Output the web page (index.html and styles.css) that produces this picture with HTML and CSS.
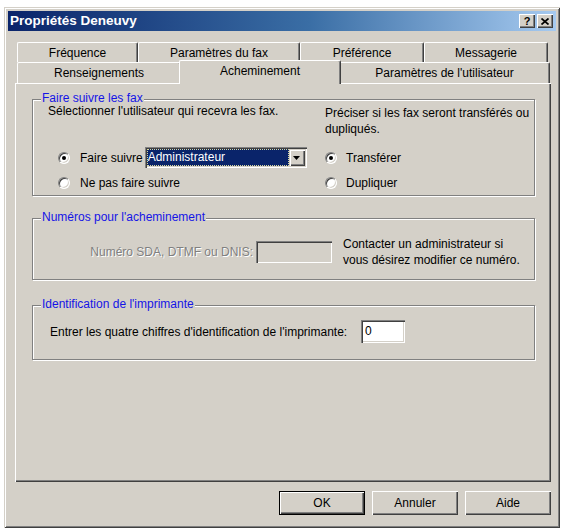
FILE: index.html
```html
<!DOCTYPE html>
<html lang="fr">
<head>
<meta charset="utf-8">
<title>Propriétés Deneuvy</title>
<link rel="stylesheet" href="styles.css">
</head>
<body>
<div class="window">
  <div class="titlebar">
    <span class="title">Propriétés Deneuvy</span>
    <div class="caption-btns">
      <span class="cbtn help">?</span>
      <span class="cbtn close"><svg width="8" height="7" viewBox="0 0 8 7"><path d="M0.5 0.5 L7.5 6.5 M7.5 0.5 L0.5 6.5" stroke="#000" stroke-width="1.7" fill="none"/></svg></span>
    </div>
  </div>
  <div class="dlg-body">
    <div class="tabs">
      <div class="tab-row">
        <div class="tab w-freq">Fréquence</div>
        <div class="tab w-pfax">Paramètres du fax</div>
        <div class="tab w-pref">Préférence</div>
        <div class="tab w-msg">Messagerie</div>
      </div>
      <div class="tab-row front">
        <div class="tab w-rens">Renseignements</div>
        <div class="tab w-ach selected">Acheminement</div>
        <div class="tab w-puti">Paramètres de l'utilisateur</div>
      </div>
    </div>
    <div class="panel">
      <div class="group g-fwd">
        <span class="legend">Faire suivre les fax</span>
        <div class="fwd-cols">
          <div class="col-left">
            <p class="desc">Sélectionner l'utilisateur qui recevra les fax.</p>
            <div class="radio-row first indent">
              <span class="radio checked"></span>
              <span class="rlabel">Faire suivre</span>
              <div class="combo">
                <span class="combo-value">Administrateur</span>
                <span class="combo-arrow"><svg width="7" height="4" viewBox="0 0 7 4"><path d="M0 0 H7 L3.5 4 Z" fill="#000"/></svg></span>
              </div>
            </div>
            <div class="radio-row indent">
              <span class="radio"></span>
              <span class="rlabel">Ne pas faire suivre</span>
            </div>
          </div>
          <div class="col-right">
            <p class="desc2">Préciser si les fax seront transférés ou<br>dupliqués.</p>
            <div class="radio-row first2">
              <span class="radio checked"></span>
              <span class="rlabel r2">Transférer</span>
            </div>
            <div class="radio-row">
              <span class="radio"></span>
              <span class="rlabel r2">Dupliquer</span>
            </div>
          </div>
        </div>
      </div>

      <div class="group g-num">
        <span class="legend">Numéros pour l'acheminement</span>
        <div class="num-row">
          <span class="num-label disabled">Numéro SDA, DTMF ou DNIS:</span>
          <span class="field field-disabled"></span>
          <p class="num-note">Contacter un administrateur si<br>vous désirez modifier ce numéro.</p>
        </div>
      </div>

      <div class="group g-id">
        <span class="legend">Identification de l'imprimante</span>
        <div class="id-row">
          <span class="id-label">Entrer les quatre chiffres d'identification de l'imprimante:</span>
          <span class="field field-id">0</span>
        </div>
      </div>
    </div>
    <div class="buttons">
      <div class="btn default"><span>OK</span></div>
      <div class="btn"><span>Annuler</span></div>
      <div class="btn"><span>Aide</span></div>
    </div>
  </div>
</div>
</body>
</html>
```

FILE: styles.css
```css
* { box-sizing: border-box; }

body {
  margin: 0;
  background: #ffffff;
  font-family: "Liberation Sans", Arial, sans-serif;
  font-size: 12px;
  color: #000;
}

p { margin: 0; }

.window {
  margin: 7px 0 0 4px;
  width: 556px;
  height: 521px;
  padding: 4px;
  background: #d4d0c8;
  box-shadow: inset 1px 1px 0 #d4d0c8, inset -1px -1px 0 #404040,
              inset 2px 2px 0 #ffffff, inset -2px -2px 0 #808080;
}

.titlebar {
  height: 20px;
  display: flex;
  align-items: center;
  justify-content: space-between;
  background: linear-gradient(to right, #0a246a 0%, #3a6ea5 55%, #a6caf0 100%);
}

.title {
  color: #fff;
  font-weight: bold;
  font-size: 13.5px;
  padding-left: 2px;
  line-height: 20px;
}

.caption-btns {
  display: flex;
  gap: 2px;
  margin-right: 3px;
}

.cbtn {
  width: 16px;
  height: 14px;
  background: #d4d0c8;
  display: flex;
  align-items: center;
  justify-content: center;
  box-shadow: inset 1px 1px 0 #ffffff, inset -1px -1px 0 #404040,
              inset -2px -2px 0 #808080;
  font-weight: bold;
  font-size: 11px;
  line-height: 14px;
}

.cbtn.help { padding-bottom: 1px; }

.dlg-body {
  padding: 11px 5px 0 7px;
}

.tabs {
  display: flex;
  flex-direction: column;
}

.tab-row {
  display: flex;
  height: 20px;
  padding-left: 2px;
}

.tab-row.front {
  height: 21px;
}

.tab {
  height: 100%;
  display: flex;
  align-items: center;
  justify-content: center;
  background: #d4d0c8;
  border-top: 1px solid #ffffff;
  border-left: 1px solid #ffffff;
  border-right: 1px solid #404040;
  border-radius: 2px 2px 0 0;
  box-shadow: inset -1px 0 0 #808080;
  white-space: nowrap;
}

.w-freq { width: 121px; }
.w-pfax { width: 162px; }
.w-pref { width: 124px; }
.w-msg  { width: 124px; }
.w-rens { width: 164px; }
.w-ach  { width: 158px; }
.w-puti { width: 211px; }

.tab.selected {
  position: relative;
  z-index: 1;
  width: 162px;
  height: 24px;
  margin: -2px -2px 0 -2px;
  padding-bottom: 4px;
}

.panel {
  width: 536px;
  height: 399px;
  padding: 16px 16px 0 17px;
  background: #d4d0c8;
  box-shadow: inset 1px 1px 0 #ffffff, inset -1px -1px 0 #404040,
              inset -2px -2px 0 #808080;
}

.group {
  position: relative;
  border: 1px solid #808080;
  box-shadow: inset 1px 1px 0 #ffffff, 1px 1px 0 #ffffff;
}

.legend {
  position: absolute;
  top: -8px;
  left: 8px;
  padding: 0 1px;
  line-height: 13px;
  background: #d4d0c8;
  color: #1414e6;
  white-space: nowrap;
}

.g-fwd {
  height: 97px;
  padding: 5px 0 0 15px;
}

.fwd-cols {
  display: flex;
}

.col-left { width: 277px; }

.desc { line-height: 13px; }

.desc2 {
  padding-top: 0;
  line-height: 16px;
}

.radio-row {
  display: flex;
  align-items: center;
  height: 21px;
  margin-top: 4px;
}

.radio-row.first { margin-top: 29px; }
.radio-row.first2 { margin-top: 10px; }
.radio-row.indent { padding-left: 10px; }

.radio {
  position: relative;
  width: 12px;
  height: 12px;
  flex: none;
  border-radius: 50%;
  background: #ffffff;
  border: 1px solid;
  border-color: #808080 #ffffff #ffffff #808080;
  box-shadow: inset 1px 1px 0 #404040, inset -1px -1px 0 #d4d0c8;
}

.radio.checked::after {
  content: "";
  position: absolute;
  left: 3px;
  top: 3px;
  width: 4px;
  height: 4px;
  border-radius: 50%;
  background: #000;
}

.rlabel { margin-left: 10px; white-space: nowrap; }
.rlabel.r2 { margin-left: 9px; }

.combo {
  margin-left: 2px;
  width: 162px;
  height: 21px;
  display: flex;
  padding: 2px;
  background: #ffffff;
  box-shadow: inset 1px 1px 0 #808080, inset 2px 2px 0 #404040,
              inset -1px -1px 0 #ffffff, inset -2px -2px 0 #d4d0c8;
}

.combo-value {
  flex: 1;
  background: #0a246a;
  color: #ffffff;
  line-height: 17px;
  padding-left: 1px;
  outline: 1px dotted #d8d8a0;
  outline-offset: -1px;
}

.combo-arrow {
  width: 16px;
  height: 17px;
  display: flex;
  align-items: center;
  justify-content: center;
  background: #d4d0c8;
  box-shadow: inset 1px 1px 0 #d4d0c8, inset 2px 2px 0 #ffffff,
              inset -1px -1px 0 #404040, inset -2px -2px 0 #808080;
}

.g-num {
  margin-top: 22px;
  height: 62px;
  padding-top: 17px;
}

.num-row {
  display: flex;
  align-items: center;
}

.num-label {
  width: 220px;
  text-align: right;
  white-space: nowrap;
}

.disabled {
  color: #808080;
  text-shadow: 1px 1px 0 #ffffff;
}

.field {
  display: block;
  height: 22px;
  box-shadow: inset 1px 1px 0 #808080, inset 2px 2px 0 #404040,
              inset -1px -1px 0 #ffffff, inset -2px -2px 0 #d4d0c8;
}

.field-disabled {
  margin-left: 3px;
  width: 76px;
  background: #d4d0c8;
}

.num-note {
  margin-left: 11px;
  line-height: 16px;
}

.g-id {
  margin-top: 25px;
  height: 55px;
  padding: 14px 0 0 17px;
}

.id-row {
  display: flex;
  align-items: center;
}

.id-label {
  width: 311px;
  white-space: nowrap;
}

.field-id {
  width: 44px;
  height: 23px;
  background: #ffffff;
  padding-left: 4px;
  line-height: 23px;
}

.buttons {
  display: flex;
  justify-content: flex-end;
  gap: 7px;
  margin-top: 9px;
}

.btn {
  width: 86px;
  height: 24px;
  display: flex;
  align-items: center;
  justify-content: center;
  background: #d4d0c8;
  box-shadow: inset 1px 1px 0 #ffffff, inset -1px -1px 0 #404040,
              inset -2px -2px 0 #808080;
}

.btn.default {
  box-shadow: inset 0 0 0 1px #000000, inset 2px 2px 0 #ffffff,
              inset -2px -2px 0 #404040, inset -3px -3px 0 #808080;
}
```
